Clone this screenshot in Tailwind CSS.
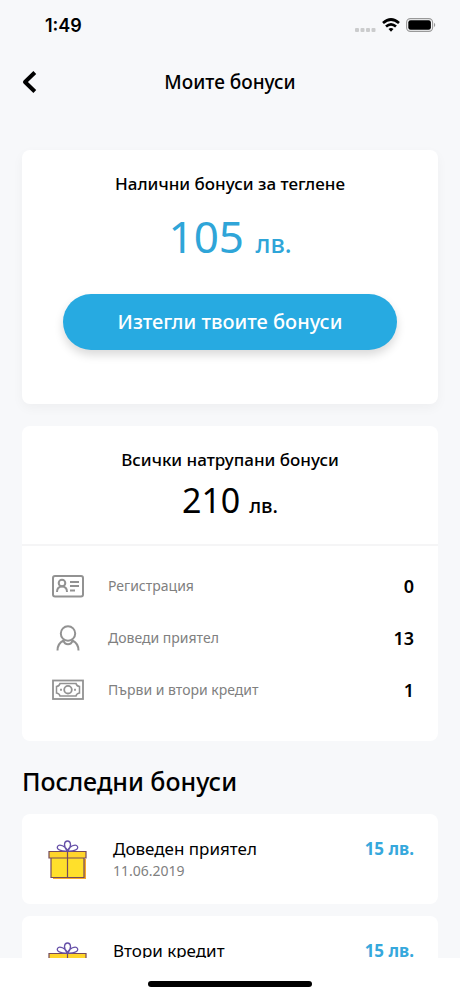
<!DOCTYPE html>
<html lang="bg">
<head>
<meta charset="utf-8">
<meta name="viewport" content="width=device-width, initial-scale=1">
<title>Моите бонуси</title>
<script src="https://cdn.jsdelivr.net/npm/@tailwindcss/browser@4"></script>
</head>
<body class="flex h-dvh flex-col overflow-hidden bg-white font-['Noto_Sans','Open_Sans',sans-serif] text-black">
<svg class="hidden" aria-hidden="true">
  <symbol id="gift" viewBox="0 0 40 40">
    <path d="M5 19H38V39H5Z" fill="#f7a928"/>
    <path d="M3 17H36V37.500H3Z" fill="#ffe02b"/>
    <path d="M1 11.500H38V18H1Z" fill="#ffd52b"/>
    <path d="M1 11.500H38V18H1ZM3 18V37.500H36V18M19.500 11.500V37.500" fill="none" stroke="#754a5c" stroke-width="1.200"/>
    <path d="M19.500 11C15 6.500 16 1 19.500 1S24 6.500 19.500 11ZM19.500 11C18 6 11 3.500 9.500 6.500S14 11.500 19.500 11ZM19.500 11C21 6 28 3.500 29.500 6.500S25 11.500 19.500 11Z" fill="#fff" stroke="#6650a8" stroke-width="1.300"/>
  </symbol>
</svg>

<div class="flex min-h-0 flex-1 flex-col overflow-hidden bg-[#f7f8fa]">
  <div class="flex h-[50px] shrink-0 items-center justify-between pr-6 pl-[45px]">
    <time class="pt-[2px] font-['Inter',sans-serif] text-lg font-semibold">1:49</time>
    <div class="flex items-center gap-[6px]">
      <svg class="h-[14px] w-[21px]" viewBox="0 0 21 14" fill="#cbcccd"><rect y="10" width="4" height="4" rx="1"/><rect x="5.500" y="10" width="4" height="4" rx="1"/><rect x="11" y="10" width="4" height="4" rx="1"/><rect x="16.500" y="10" width="4" height="4" rx="1"/></svg>
      <svg class="h-[14px] w-[18px]" viewBox="0 0 18 14" fill="none" stroke="#000" stroke-width="2.700"><path d="M1 5Q9-2 17 5M4 8.500Q9 4.200 14 8.500"/><path d="M6.500 11Q9 9 11.500 11L9 13.700Z" fill="#000" stroke="none"/></svg>
      <svg class="h-[14px] w-[30px]" viewBox="0 0 30 14"><rect x=".6" y=".6" width="26" height="12.800" rx="3.800" fill="none" stroke="#999" stroke-width="1.100"/><rect x="2.300" y="2.300" width="22.600" height="9.400" rx="2.300"/><path d="M28 4.800Q30.500 7 28 9.200Z" fill="#999"/></svg>
    </div>
  </div>
  <header class="grid h-16 shrink-0 grid-cols-[1fr_auto_1fr] items-center px-[22px]">
    <button type="button" aria-label="Назад" class="justify-self-start"><svg class="h-6 w-4" viewBox="0 0 16 24" fill="none" stroke="#000" stroke-width="4" stroke-linejoin="round"><path d="M12.800 2.500L3 12L12.800 21.500"/></svg></button>
    <h1 class="text-[19px] leading-7 font-medium">Моите бонуси</h1>
  </header>

  <main class="flex flex-col px-[22px] pt-9">
    <section class="rounded-lg bg-white px-[41px] pt-[22px] pb-[54px] text-center shadow-[0_4px_12px_rgb(0_0_0/0.04)]">
      <h2 class="text-[17px] leading-6 font-medium">Налични бонуси за теглене</h2>
      <p class="mt-[10px] text-[44px] leading-[60px] text-[#2fa5d8]">105 <span class="text-[25px] leading-none font-medium">лв.</span></p>
      <button type="button" class="mt-7 block h-14 w-full rounded-full bg-[#27aae1] text-xl font-medium text-white shadow-[0_5px_10px_rgb(0_0_0/0.15)]">Изтегли твоите бонуси</button>
    </section>

    <section class="mt-[22px] rounded-lg bg-white">
      <div class="border-b-2 border-[#f5f5f6] pt-[22px] pb-5 text-center">
        <h2 class="text-[17px] leading-6 font-medium">Всички натрупани бонуси</h2>
        <p class="mt-1 text-[34px] leading-[48px]">210 <span class="text-xl font-medium">лв.</span></p>
      </div>
      <dl class="flex flex-col pt-[14px] pr-6 pb-[25px] pl-[29px] text-[#808080]">
        <div class="flex h-[52px] items-center">
          <svg class="h-8 w-[34px]" viewBox="0 0 34 32" fill="none" stroke="#929292" stroke-width="2"><rect x="2" y="6" width="30" height="20.500" rx="2"/><circle cx="11" cy="13" r="3.300"/><path d="M6 22Q6 16.500 11 16.500T16 22M19 12H28M19 16H28M19 20.500H24"/></svg>
          <dt class="ml-[23px] flex-1 text-sm">Регистрация</dt><dd class="text-lg font-semibold text-black">0</dd>
        </div>
        <div class="flex h-[52px] items-center">
          <svg class="h-8 w-[34px]" viewBox="0 0 34 32" fill="none" stroke="#929292" stroke-width="2"><circle cx="17" cy="11.500" r="7.200"/><path d="M6.500 28.500Q6.500 21.500 12.500 18.500Q13.500 22.300 17 22.300T21.500 18.500Q27.500 21.500 27.500 28.500"/></svg>
          <dt class="ml-[23px] flex-1 text-sm">Доведи приятел</dt><dd class="text-lg font-semibold text-black">13</dd>
        </div>
        <div class="flex h-[52px] items-center">
          <svg class="h-8 w-[34px]" viewBox="0 0 34 32" fill="none" stroke="#929292" stroke-width="1.800"><rect x="2" y="6.500" width="30" height="18.500"/><path d="M9 9.500H25Q25.500 12 28.500 12.500V19Q25.500 19.500 25 22H9Q8.500 19.500 5.500 19V12.500Q8.500 12 9 9.500Z" stroke-width="1.500"/><circle cx="17" cy="15.700" r="3.800"/><path d="M10 14.700v2M24 14.700v2"/></svg>
          <dt class="ml-[23px] flex-1 text-sm">Първи и втори кредит</dt><dd class="text-lg font-semibold text-black">1</dd>
        </div>
      </dl>
    </section>

    <h2 class="mt-[22px] text-[25px] leading-9 font-medium">Последни бонуси</h2>
    <ul class="mt-[15px] flex flex-col gap-3">
      <li class="flex h-[90px] items-start rounded-lg bg-white pt-6 pr-6 pl-[26px]">
        <svg class="mt-[2px] h-10 w-10"><use href="#gift"/></svg>
        <div class="ml-[25px] flex-1"><h3 class="text-[17px] leading-[22px]">Доведен приятел</h3><p class="text-sm leading-[22px] text-[#808080]">11.06.2019</p></div>
        <p class="text-[17px] leading-[22px] font-bold text-[#36a8dc]">15 лв.</p>
      </li>
      <li class="flex h-[90px] items-start rounded-lg bg-white pt-6 pr-6 pl-[26px]">
        <svg class="mt-[2px] h-10 w-10"><use href="#gift"/></svg>
        <div class="ml-[25px] flex-1"><h3 class="text-[17px] leading-[22px]">Втори кредит</h3></div>
        <p class="text-[17px] leading-[22px] font-bold text-[#36a8dc]">15 лв.</p>
      </li>
    </ul>
  </main>
</div>
<footer class="flex h-[38px] shrink-0 items-end justify-center bg-white pb-[9px]"><div class="h-[6px] w-[164px] rounded-full bg-black"></div></footer>
</body>
</html>
